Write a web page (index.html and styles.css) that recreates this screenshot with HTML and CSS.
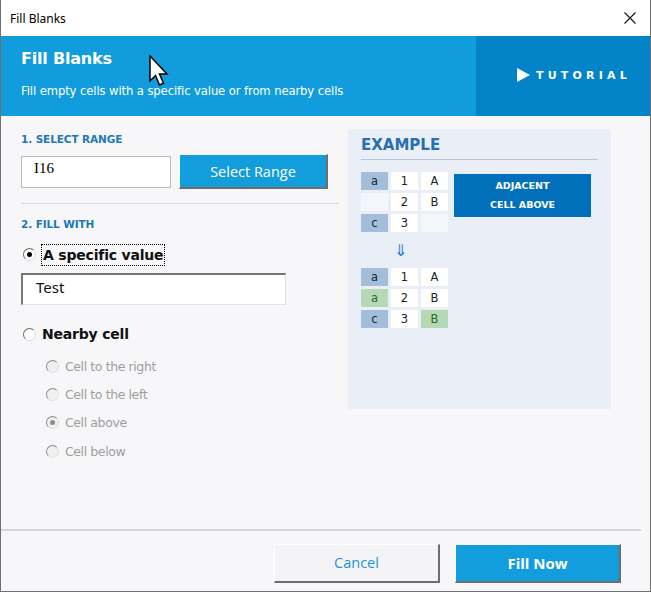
FILE: index.html
```html
<!DOCTYPE html>
<html>
<head>
<meta charset="utf-8">
<link rel="stylesheet" href="styles.css">
</head>
<body>
<div class="window">
  <div class="titlebar">
    <span class="title">Fill Blanks</span>
    <svg class="close" width="12" height="12" viewBox="0 0 12 12"><path d="M0.5 0.5 L11.5 11.5 M11.5 0.5 L0.5 11.5" stroke="#111" stroke-width="1.1" fill="none"/></svg>
  </div>
  <div class="header">
    <div class="header-main">
      <div class="h-title">Fill Blanks</div>
      <div class="h-sub">Fill empty cells with a specific value or from nearby cells</div>
    </div>
    <div class="tutorial">
      <svg width="13" height="14" viewBox="0 0 13 14"><path d="M0 0 L13 7 L0 14 Z" fill="#fff"/></svg>
      <span>TUTORIAL</span>
    </div>
  </div>
  <div class="content">
    <div class="left">
      <div class="section-label">1. SELECT RANGE</div>
      <div class="range-row">
        <div class="textbox range-box">I16</div>
        <div class="btn3d btn-blue select-btn">Select Range</div>
      </div>
      <div class="sep"></div>
      <div class="section-label label2">2. FILL WITH</div>
      <div class="radio-row main-opt opt1">
        <span class="radio checked"></span>
        <span class="focus">A specific value</span>
      </div>
      <div class="textbox value-box">Test</div>
      <div class="radio-row main-opt opt2">
        <span class="radio"></span>
        <span class="opt-text">Nearby cell</span>
      </div>
      <div class="subopts">
        <div class="radio-row sub"><span class="radio dis"></span><span>Cell to the right</span></div>
        <div class="radio-row sub"><span class="radio dis"></span><span>Cell to the left</span></div>
        <div class="radio-row sub"><span class="radio dis checked"></span><span>Cell above</span></div>
        <div class="radio-row sub"><span class="radio dis"></span><span>Cell below</span></div>
      </div>
    </div>
    <div class="example">
      <div class="ex-title">EXAMPLE</div>
      <div class="ex-body">
        <div class="tables">
          <div class="grid">
            <div class="c k">a</div><div class="c w">1</div><div class="c w">A</div>
            <div class="c e"></div><div class="c w">2</div><div class="c w">B</div>
            <div class="c k">c</div><div class="c w">3</div><div class="c e"></div>
          </div>
          <div class="arrow">⇓</div>
          <div class="grid">
            <div class="c k">a</div><div class="c w">1</div><div class="c w">A</div>
            <div class="c g">a</div><div class="c w">2</div><div class="c w">B</div>
            <div class="c k">c</div><div class="c w">3</div><div class="c g">B</div>
          </div>
        </div>
        <div class="adjacent">ADJACENT<br>CELL ABOVE</div>
      </div>
    </div>
  </div>
  <div class="footer">
    <div class="btn3d btn-grey">Cancel</div>
    <div class="btn3d btn-blue fill-btn">Fill Now</div>
  </div>
  <svg class="cursor" width="20" height="34" viewBox="0 0 20 34"><path d="M1 1 L1 26 L6.5 20.5 L10.5 30 L14.5 28.3 L10.5 19 L18 19 Z" fill="#fff" stroke="#000" stroke-width="1.5" stroke-linejoin="miter"/></svg>
</div>
</body>
</html>
```
FILE: styles.css
```css
* { box-sizing: border-box; }
html, body { margin: 0; padding: 0; }
body { background: #fff; font-family: "Noto Sans", "DejaVu Sans", sans-serif; }
.window {
  position: relative;
  width: 651px; height: 592px;
  border-left: 1px solid #707070;
  border-right: 1px solid #707070;
  border-bottom: 1px solid #707070;
  background: #f7f7f9;
  display: flex; flex-direction: column;
}
.titlebar {
  height: 36px; background: #fff; flex: none;
  display: flex; align-items: center; justify-content: space-between;
  padding: 0 14px 0 9px;
}
.title { font-size: 12px; color: #000; font-family: "Noto Sans", sans-serif; }
.header { height: 80px; display: flex; flex: none; }
.header-main { flex: 1; background: #119ddd; color: #fff; padding: 13px 0 0 20px; }
.h-title { font-family: "DejaVu Sans", sans-serif; font-weight: bold; font-size: 16px; letter-spacing: -0.2px; line-height: 20px; }
.h-sub { font-family: "DejaVu Sans", sans-serif; font-size: 11.6px; margin-top: 15px; letter-spacing: -0.1px; }
.tutorial {
  width: 174px; background: #0384c8; color: #fff;
  display: flex; align-items: center; padding-left: 41px; gap: 6px;
  padding-bottom: 2px;
}
.tutorial span { font-family: "DejaVu Sans", sans-serif; font-weight: bold; font-size: 11px; letter-spacing: 4.2px; }
.content { display: flex; flex: 1; padding-left: 20px; }
.left { width: 318px; }
.section-label { font-family: "DejaVu Sans", sans-serif; font-weight: bold; font-size: 10.5px; color: #2278b8; margin-top: 17px; line-height: 12px; letter-spacing: -0.1px; }
.label2 { margin-top: 14px; }
.range-row { display: flex; align-items: center; margin-top: 9px; gap: 8px; }
.textbox { background: #fff; border: 1px solid #bcbcbc; }
.range-box { width: 150px; height: 32px; font-family: "Liberation Serif", serif; font-size: 15px; padding: 3px 0 0 12px; color: #000; }
.btn3d {
  display: flex; align-items: center; justify-content: center;
  border-top: 1px solid #fff; border-left: 1px solid #fff;
  border-right: 2px solid #6e6e6e; border-bottom: 2px solid #6e6e6e;
}
.btn-blue { background: #129ddd; color: #fff; }
.select-btn { width: 149px; height: 35px; font-size: 14.5px; font-family: "Open Sans", sans-serif; }
.sep { height: 1px; background: #dadada; margin-top: 14px; }
.radio-row { display: flex; align-items: center; }
.radio {
  width: 13px; height: 13px; border-radius: 50%;
  background: #fff; border: 1px solid #6a6a6a; border-right-color: #d8d8d8; border-bottom-color: #d8d8d8;
  position: relative; flex: none;
}
.radio.checked::after {
  content: ""; position: absolute; left: 3px; top: 3px; width: 5px; height: 5px; border-radius: 50%; background: #000;
}
.radio.dis { background: #f0f0f0; border-color: #8a8a8a #e0e0e0 #e0e0e0 #8a8a8a; }
.radio.dis.checked::after { background: #8c8c8c; }
.main-opt { font-family: "DejaVu Sans", sans-serif; font-weight: bold; font-size: 14px; color: #111; gap: 5px; margin-left: 2px; }
.opt1 { margin-top: 13px; height: 23px; }
.focus { border: 1px dotted #000; padding: 0 1px; line-height: 20px; letter-spacing: -0.2px; }
.value-box { width: 265px; height: 32px; margin-top: 7px; border-top: 2px solid #777; border-left: 2px solid #777; border-right: 1px solid #e2e2e2; border-bottom: 1px solid #e2e2e2; font-family: "Noto Sans", sans-serif; font-size: 15px; padding: 2px 0 0 13px; color: #111; }
.opt2 { margin-top: 21px; letter-spacing: -0.2px; }
.opt2 .opt-text { margin-left: 1px; }
.subopts { margin-left: 25px; margin-top: 10px; }
.sub { font-family: "DejaVu Sans", sans-serif; font-size: 12.5px; color: #9e9e9e; gap: 6px; height: 28.4px; letter-spacing: -0.4px; }
.example {
  width: 263px; height: 280px; margin-left: 9px; margin-top: 13px;
  background: #e9eef7; padding: 7px 13px 0 13px;
}
.ex-title { font-family: "DejaVu Sans", sans-serif; font-weight: bold; font-size: 15px; color: #2a6eb0; line-height: 18px; padding-bottom: 5px; border-bottom: 1px solid #b6c5da; }
.ex-body { display: flex; margin-top: 12px; gap: 6px; }
.grid { display: grid; grid-template-columns: 27px 27px 27px; grid-auto-rows: 18px; gap: 3px 3px; }
.grid .c { font-family: "DejaVu Sans", sans-serif; font-size: 11.5px; display: flex; align-items: center; justify-content: center; color: #222; }
.c.k { background: #a2bedb; }
.c.w { background: #fff; }
.c.e { background: #f3f6fb; }
.c.g { background: #b5d8b5; color: #2a6a2a; }
.arrow { color: #1a7fc8; font-size: 16px; height: 36px; display: flex; align-items: center; padding-left: 33px; font-family: "DejaVu Sans", sans-serif; }
.adjacent {
  width: 137px; height: 43px; margin-top: 2px;
  background: #0070ba; color: #fff; font-family: "DejaVu Sans", sans-serif; font-weight: bold; font-size: 9.5px;
  text-align: center; line-height: 19px; padding-top: 2px;
}
.footer {
  height: 62px; flex: none; border-top: 2px solid #d6d6d8; margin-right: 9px;
  display: flex; justify-content: flex-end; align-items: center; gap: 15px; padding-right: 20px; padding-top: 4px;
}
.btn-grey { background: #f4f4f6; color: #1b96d5; width: 166px; height: 39px; font-family: "Open Sans", sans-serif; font-size: 14.5px; }
.fill-btn { width: 166px; height: 39px; font-family: "Open Sans", sans-serif; font-weight: bold; font-size: 15px; }
.cursor { position: absolute; left: 148px; top: 55px; }
```
